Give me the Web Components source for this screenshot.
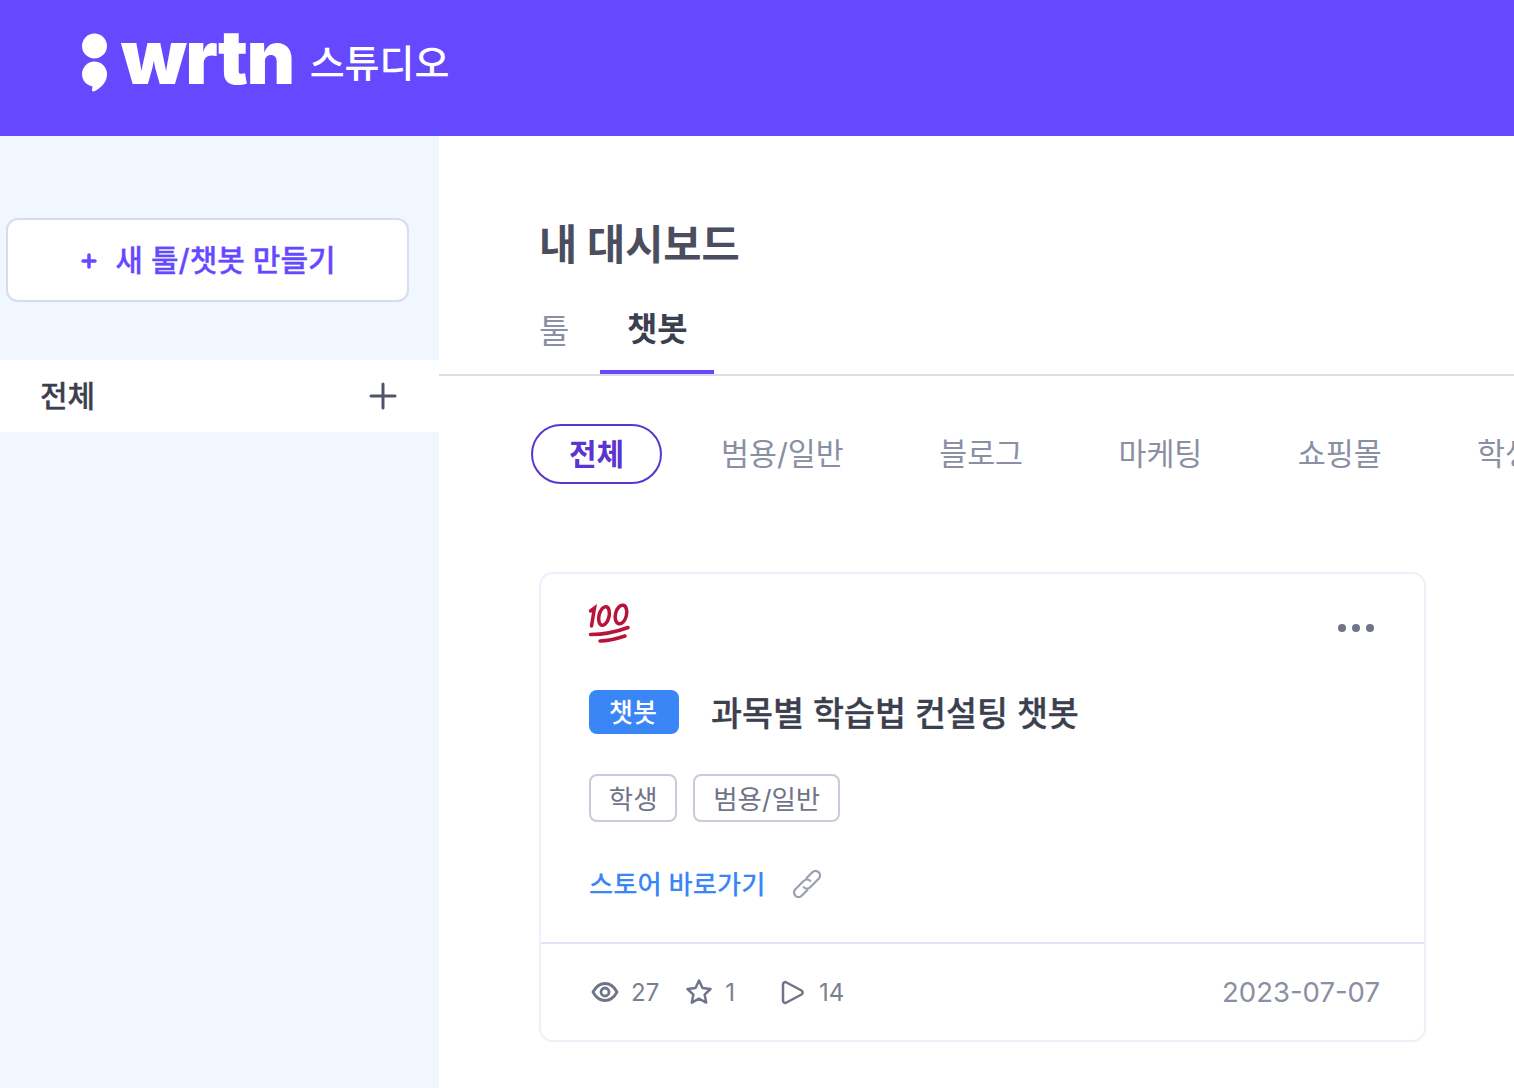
<!DOCTYPE html>
<html lang="ko">
<head>
<meta charset="utf-8">
<title>wrtn 스튜디오</title>
<style>
	html, body {
		margin: 0;
		height: 100%;
		overflow: hidden;
	}

	body {
		width: 1514px;
		height: 1088px;
		display: flex;
		flex-direction: column;
		background: #fff;
		font-family: Inter, "Noto Sans CJK KR", sans-serif;
		color: #3b3f4e;
	}

	.page {
		flex: 1;
		display: flex;
		min-height: 0;
	}

	.content {
		flex: 1;
		min-width: 0;
		overflow: hidden;
	}
</style>
</head>
<body>
	<app-header></app-header>
	<div class="page">
		<side-bar></side-bar>
		<div class="content">
			<dash-head></dash-head>
			<filter-chips></filter-chips>
			<tool-card></tool-card>
		</div>
	</div>

<script>
class AppHeader extends HTMLElement {
	constructor() {
		super();
		const shadow = this.attachShadow({ mode: "open" });
		shadow.innerHTML = `
			<style>
				:host {
					display: flex;
					align-items: center;
					box-sizing: border-box;
					height: 136px;
					flex: none;
					padding: 0 0 13px 81px;
					background: #6649ff;
					color: #fff;
				}
				svg { width: 27px; height: 60px; flex: none; margin-top: 3px; }
				.brand {
					margin-left: 13px;
					font: 900 75px/1 Inter, sans-serif;
					letter-spacing: -1.500px;
					margin-top: -11px;
				}
				.studio {
					margin-left: 16px;
					font: 500 38px/1 "Noto Sans CJK KR", sans-serif;
					margin-top: -2px;
				}
			</style>
			<svg viewBox="0 0 27 60" aria-hidden="true">
				<circle cx="13.500" cy="13" r="12.500" fill="#fff"/>
				<path d="M1 41a12.500 12.500 0 1 1 25 0c0 8-5 13-12 17-1.500 1-3.500.5-3-1.500l.5-3C5 52 1 47 1 41z" fill="#fff"/>
			</svg>
			<span class="brand">wrtn</span>
			<span class="studio">스튜디오</span>
		`;
	}
}

class SideBar extends HTMLElement {
	constructor() {
		super();
		const shadow = this.attachShadow({ mode: "open" });
		shadow.innerHTML = `
			<style>
				:host {
					display: block;
					width: 439px;
					flex: none;
					background: #f0f7ff;
					padding-top: 82px;
					box-sizing: border-box;
				}
				.create {
					display: flex;
					align-items: center;
					justify-content: center;
					gap: 17px;
					box-sizing: border-box;
					width: 403px;
					height: 84px;
					margin-left: 6px;
					padding: 0 0 4px 1px;
					background: #fff;
					border: 2px solid #d8dcec;
					border-radius: 12px;
					color: #6649ff;
					font-size: 30px;
					font-weight: 500;
					-webkit-text-stroke: 0.3px #6649ff;
				}
				.create svg { width: 18px; height: 18px; flex: none; margin-top: 6px; }
				.all {
					display: flex;
					align-items: center;
					justify-content: space-between;
					height: 72px;
					margin-top: 58px;
					padding: 0 40px;
					background: #fff;
					font-size: 30px;
					font-weight: 500;
					color: #3b3f4e;
				}
				.all span { padding-bottom: 4px; -webkit-text-stroke: 0.3px #3b3f4e; }
				.all svg { width: 30px; height: 30px; margin-right: 1px; }
			</style>
			<div class="create">
				<svg viewBox="0 0 18 18" fill="none" stroke="#6649ff" stroke-width="3.500" stroke-linecap="round"><path d="M9 3v12M3 9h12"/></svg>
				<span>새 툴/챗봇 만들기</span>
			</div>
			<div class="all">
				<span>전체</span>
				<svg viewBox="0 0 30 30" fill="none" stroke="#50546a" stroke-width="3" stroke-linecap="round"><path d="M15 3v24M3 15h24"/></svg>
			</div>
		`;
	}
}

class DashHead extends HTMLElement {
	constructor() {
		super();
		const shadow = this.attachShadow({ mode: "open" });
		shadow.innerHTML = `
			<style>
				:host {
					display: block;
					padding-top: 80px;
					border-bottom: 2px solid #dcdde9;
				}
				h1 {
					margin: 0 0 0 100px;
					height: 58px;
					font-size: 41.500px;
					line-height: 58px;
					font-weight: 700;
					color: #4a4e5e;
				}
				.tabs {
					display: flex;
					margin-left: 100px;
					padding-top: 34px;
				}
				.tab {
					display: flex;
					align-items: center;
					font-size: 33px;
					box-sizing: border-box;
					height: 66px;
					padding-bottom: 24px;
				}
				.tab.off { color: #8a8fa3; margin-right: 31px; }
				.tab.on {
					padding: 0 26.500px 24px;
					font-weight: 700;
					color: #3b3f4e;
					border-bottom: 4px solid #6649ff;
				}
			</style>
			<h1>내 대시보드</h1>
			<div class="tabs">
				<div class="tab off">툴</div>
				<div class="tab on">챗봇</div>
			</div>
		`;
	}
}

class FilterChips extends HTMLElement {
	constructor() {
		super();
		const shadow = this.attachShadow({ mode: "open" });
		const names = ["전체", "범용/일반", "블로그", "마케팅", "쇼핑몰", "학생"];
		shadow.innerHTML = `
			<style>
				:host {
					display: flex;
					gap: 19.400px;
					margin: 48px 0 0 92px;
					width: 1100px;
				}
				.chip {
					display: flex;
					align-items: center;
					flex: none;
					box-sizing: border-box;
					height: 60px;
					padding: 0 36px 4px;
					border: 2px solid transparent;
					border-radius: 30px;
					font-size: 30.400px;
					color: #8a8fa3;
				}
				.chip.on {
					margin-right: 1.400px;
					border-color: #5a35d0;
					color: #5a35d0;
					font-size: 30px;
					font-weight: 700;
				}
			</style>
			${names.map((n, i) => `<div class="chip${i === 0 ? " on" : ""}">${n}</div>`).join("")}
		`;
	}
}

class ToolCard extends HTMLElement {
	constructor() {
		super();
		const shadow = this.attachShadow({ mode: "open" });
		shadow.innerHTML = `
			<style>
				:host {
					display: block;
					box-sizing: border-box;
					width: 887px;
					height: 470px;
					margin: 88px 0 0 100px;
					background: #fff;
					border: 2px solid #eeeffb;
					border-radius: 14px;
				}
				.body {
					box-sizing: border-box;
					height: 370px;
					padding: 26px 49px 0 48px;
					border-bottom: 2px solid #e4e5f3;
				}
				.top {
					display: flex;
					justify-content: space-between;
					height: 90px;
				}
				.emoji { width: 44px; height: 44px; margin: 1px 0 0 -1px; }
				.dots { width: 38px; height: 10px; margin: 23px 0 0 0; }
				.title {
					display: flex;
					align-items: center;
					gap: 32px;
					height: 44px;
				}
				.badge {
					display: flex;
					align-items: center;
					justify-content: center;
					box-sizing: border-box;
					width: 90px;
					height: 44px;
					padding: 0 2px 3px 0;
					background: #3b86f6;
					border-radius: 8px;
					color: #fff;
					font-size: 26px;
					font-weight: 500;
				}
				.name {
					padding-bottom: 2px;
					font-size: 33.700px;
					font-weight: 500;
					color: #3b3f4e;
					-webkit-text-stroke: 0.3px #3b3f4e;
				}
				.tags {
					display: flex;
					gap: 16px;
					margin-top: 40px;
				}
				.tag {
					box-sizing: border-box;
					height: 48px;
					padding: 0 17.800px 2px;
					display: flex;
					align-items: center;
					border: 2px solid #c9ccd8;
					border-radius: 8px;
					font-size: 26.500px;
					color: #6f7488;
				}
				.store {
					display: flex;
					align-items: center;
					gap: 28px;
					margin-top: 41px;
					color: #3b86f6;
					font-size: 26.300px;
					font-weight: 500;
				}
				.store svg { width: 28px; height: 28px; margin-top: 2px; }
				.foot {
					display: flex;
					align-items: center;
					justify-content: space-between;
					height: 96px;
					padding: 0 44px 0 50px;
					color: #7a7f92;
				}
				.stats {
					display: flex;
					align-items: center;
					font-size: 24px;
				}
				.stats svg { width: 28px; height: 28px; flex: none; margin-right: 12px; }
				.stats span { margin-right: 26px; }
				.stats svg.play { margin-right: 13px; }
				.date { font-size: 27.500px; color: #8a8fa3; }
			</style>
			<div class="body">
				<div class="top">
					<svg class="emoji" viewBox="0 0 44 44" fill="none" stroke="#b8143a" stroke-linecap="round" aria-label="100">
						<path d="M2.500 10l4-3-3 18" stroke-width="3.500"/>
						<ellipse cx="16" cy="15" rx="5" ry="9.500" transform="rotate(14 16 15)" stroke-width="3.500"/>
						<ellipse cx="33" cy="13.500" rx="5.500" ry="9.500" transform="rotate(14 33 13.500)" stroke-width="3.500"/>
						<path d="M2.500 33.500C15 33.500 28 31 40 26.500" stroke-width="3.500"/>
						<path d="M12 40C20 40 28 38 37 35" stroke-width="3.500"/>
					</svg>
					<svg class="dots" viewBox="0 0 38 10" fill="#6f7488">
						<circle cx="5" cy="5" r="4"/><circle cx="19" cy="5" r="4"/><circle cx="33" cy="5" r="4"/>
					</svg>
				</div>
				<div class="title">
					<div class="badge">챗봇</div>
					<div class="name">과목별 학습법 컨설팅 챗봇</div>
				</div>
				<div class="tags">
					<div class="tag">학생</div>
					<div class="tag">범용/일반</div>
				</div>
				<div class="store">
					<span>스토어 바로가기</span>
					<svg viewBox="0 0 28 28" fill="none" stroke="#9a9eaf" stroke-width="2.200" stroke-linecap="round" stroke-linejoin="round">
						<g transform="rotate(-45 14 14)">
							<path d="M2 9.500H14a4.500 4.500 0 0 1 4.500 4.500M2 9.500a4.500 4.500 0 0 0 0 9H10"/>
							<path d="M26 18.500H14a4.500 4.500 0 0 1-4.500-4.500M26 18.500a4.500 4.500 0 0 0 0-9H18"/>
						</g>
					</svg>
				</div>
			</div>
			<div class="foot">
				<div class="stats">
					<svg viewBox="0 0 28 28" fill="none" stroke="#6f7488" stroke-width="2.800" stroke-linejoin="round"><path d="M2 14c3-5.500 7-8.500 12-8.500S23 8.500 26 14c-3 5.500-7 8.500-12 8.500S5 19.500 2 14z"/><circle cx="14" cy="14" r="4"/></svg>
					<span>27</span>
					<svg viewBox="0 0 28 28" fill="none" stroke="#6f7488" stroke-width="2.500" stroke-linejoin="round"><path d="M14 2.500l3.500 7.500 8 1-5.900 5.600 1.600 8L14 20.700l-7.200 3.900 1.600-8L2.500 11l8-1z"/></svg>
					<span style="margin-right:43px">1</span>
					<svg class="play" viewBox="0 0 28 28" fill="none" stroke="#6f7488" stroke-width="2.500" stroke-linejoin="round"><path d="M5 6.500c0-2 2-3 3.500-2l15 8c1.500 1 1.500 3 0 4l-15 8c-1.500 1-3.500 0-3.500-2z"/></svg>
					<span>14</span>
				</div>
				<div class="date">2023-07-07</div>
			</div>
		`;
	}
}

customElements.define("app-header", AppHeader);
customElements.define("side-bar", SideBar);
customElements.define("dash-head", DashHead);
customElements.define("filter-chips", FilterChips);
customElements.define("tool-card", ToolCard);
</script>
</body>
</html>
